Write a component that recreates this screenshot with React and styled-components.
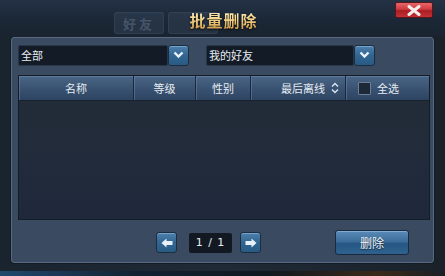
import styled, { createGlobalStyle } from "styled-components";

const GlobalStyle = createGlobalStyle`
  html, body {
    margin: 0;
    padding: 0;
    background: #141b24;
  }
  * { box-sizing: border-box; }
`;

const FONT = `"Noto Sans CJK SC", "Noto Sans", "Liberation Sans", sans-serif`;

const Window = styled.div`
  width: 445px;
  height: 276px;
  display: flex;
  flex-direction: column;
  overflow: hidden;
  font-family: ${FONT};
  background: linear-gradient(90deg, #1a242f 0%, #1f2a36 50%, #1a2129 100%);
  position: relative;
`;

const TitleBar = styled.div`
  height: 37px;
  flex-shrink: 0;
  position: relative;
  display: flex;
  align-items: center;
  justify-content: center;
  background: linear-gradient(180deg, #243246 0%, #1b2736 55%, #1a2430 100%);
`;

const GhostTabs = styled.div`
  position: absolute;
  left: 114px;
  top: 12px;
  display: flex;
  gap: 4px;
`;

const GhostTab = styled.div`
  width: 50px;
  height: 22px;
  border-radius: 3px;
  background: rgba(60, 78, 100, 0.35);
  border: 1px solid rgba(80, 100, 125, 0.25);
  color: rgba(120, 138, 160, 0.4);
  font-size: 13px;
  font-weight: bold;
  display: flex;
  align-items: center;
  justify-content: center;
  letter-spacing: 3px;
`;

const Title = styled.div`
  font-size: 16px;
  font-weight: bold;
  letter-spacing: 1px;
  margin-left: 2px;
  margin-top: 2px;
  background: linear-gradient(180deg, #fff6d2 0%, #f3d58a 45%, #c98d32 100%);
  -webkit-background-clip: text;
  background-clip: text;
  color: transparent;
  filter: drop-shadow(0 1px 1px rgba(0, 0, 0, 0.8));
  position: relative;
  z-index: 1;
`;

const CloseButton = styled.div`
  position: absolute;
  right: 12px;
  top: 2px;
  width: 38px;
  height: 16px;
  border-radius: 2px;
  background: linear-gradient(180deg, #e8676a 0%, #cf3a3e 45%, #a81e24 55%, #c33136 100%);
  border: 1px solid #5a1518;
  display: flex;
  align-items: center;
  justify-content: center;
`;

const Body = styled.div`
  flex: 1;
  padding: 0 11px 13px 11px;
  display: flex;
  flex-direction: column;
`;

const Panel = styled.div`
  flex: 1;
  background: #3a4a60;
  border: 1px solid #586a83;
  border-radius: 3px;
  box-shadow: 0 0 0 1px #131a22;
  padding: 6px 5px 0 6px;
  display: flex;
  flex-direction: column;
`;

const FilterRow = styled.div`
  display: flex;
  gap: 17px;
  height: 22px;
`;

const Select = styled.div`
  display: flex;
  align-items: center;
`;

const SelectField = styled.div`
  width: ${(p) => p.$w}px;
  height: 21px;
  background: #131b26;
  border: 1px solid #28364a;
  border-radius: 2px;
  color: #e8edf3;
  font-size: 11px;
  padding-left: 2px;
  display: flex;
  align-items: center;
`;

const IconButton = styled.div`
  width: ${(p) => p.$w || 21}px;
  height: 21px;
  border-radius: 3px;
  background: linear-gradient(180deg, #4d80ad 0%, #326690 50%, #285a84 100%);
  border: 1px solid #1c2d40;
  box-shadow: inset 0 1px 0 rgba(160, 200, 235, 0.5);
  display: flex;
  align-items: center;
  justify-content: center;
`;

const Table = styled.div`
  margin-top: 9px;
  height: 145px;
  width: 412px;
  display: flex;
  flex-direction: column;
  border: 1px solid #141c26;
  background: #212b3a;
`;

const HeaderRow = styled.div`
  display: grid;
  grid-template-columns: 115px 62px 55px 95px 1fr;
  height: 25px;
`;

const HeaderCell = styled.div`
  display: flex;
  align-items: center;
  justify-content: ${(p) => p.$justify || "center"};
  gap: 6px;
  padding: ${(p) => p.$pad || "0"};
  color: #e6ebf2;
  font-size: 11px;
  background: linear-gradient(180deg, #4a6586 0%, #3a5373 50%, #2d4562 100%);
  border-right: 1px solid #1b2838;
  border-bottom: 1px solid #18222e;
  box-shadow: inset 1px 1px 0 rgba(130, 160, 195, 0.35);
  &:last-child {
    border-right: none;
  }
`;

const Checkbox = styled.div`
  width: 13px;
  height: 13px;
  background: #1e2938;
  border: 1px solid #6b7f99;
  border-radius: 1px;
`;

const TableBody = styled.div`
  flex: 1;
  background: linear-gradient(180deg, #222c38 0%, #212b3b 50%, #1f293b 100%);
`;

const Footer = styled.div`
  flex: 1;
  display: flex;
  align-items: center;
  padding-top: 3px;
`;

const Pager = styled.div`
  display: flex;
  align-items: center;
  gap: 12px;
  margin-left: 138px;
`;

const PageBox = styled.div`
  width: 43px;
  height: 20px;
  background: #121923;
  border-radius: 2px;
  color: #e8edf3;
  font-family: "DejaVu Sans", sans-serif;
  font-size: 11px;
  display: flex;
  align-items: center;
  justify-content: center;
  margin-right: -4px;
  letter-spacing: 1px;
`;

const DeleteButton = styled.div`
  margin-left: 74px;
  width: 74px;
  height: 25px;
  border-radius: 3px;
  border: 1px solid #1a2a3c;
  background: linear-gradient(180deg, #5a8bb8 0%, #3d6d99 45%, #265784 55%, #2f628e 100%);
  box-shadow: inset 0 1px 0 rgba(170, 205, 240, 0.5);
  color: #f1f5fa;
  font-size: 12px;
  display: flex;
  align-items: center;
  justify-content: center;
  text-shadow: 0 1px 1px rgba(0, 0, 0, 0.6);
`;

const BottomStrip = styled.div`
  position: absolute;
  left: 0;
  right: 0;
  bottom: 0;
  height: 5px;
  background: linear-gradient(90deg, #1f4a6e 0%, #122233 30%, #101820 60%, #3a2a18 85%, #1a1e24 100%);
`;

const Chevron = () => (
  <svg width="11" height="8" viewBox="0 0 11 8">
    <path d="M1.5 1.5 L5.5 5.5 L9.5 1.5" fill="none" stroke="#eaf2fb" strokeWidth="2.4" />
  </svg>
);

const Arrow = ({ dir }) => (
  <svg width="12" height="10" viewBox="0 0 12 10">
    <path
      d={dir === "left" ? "M0.5 5 L5.5 0.5 L5.5 3 L11.5 3 L11.5 7 L5.5 7 L5.5 9.5 Z" : "M11.5 5 L6.5 0.5 L6.5 3 L0.5 3 L0.5 7 L6.5 7 L6.5 9.5 Z"}
      fill="#e8f1fb"
    />
  </svg>
);

const SortIcon = () => (
  <svg width="8" height="12" viewBox="0 0 8 12">
    <path d="M1 4.5 L4 1.5 L7 4.5 M1 7.5 L4 10.5 L7 7.5" fill="none" stroke="#d8e2ee" strokeWidth="1.5" />
  </svg>
);

const CloseX = () => (
  <svg width="14" height="11" viewBox="0 0 14 11">
    <path d="M2 1.5 L12 9.5 M12 1.5 L2 9.5" stroke="#f3eded" strokeWidth="3" strokeLinecap="round" />
  </svg>
);

export default function App() {
  return (
    <>
      <GlobalStyle />
      <Window>
        <TitleBar>
          <GhostTabs>
            <GhostTab>好友</GhostTab>
            <GhostTab />
          </GhostTabs>
          <Title>批量删除</Title>
          <CloseButton>
            <CloseX />
          </CloseButton>
        </TitleBar>
        <Body>
          <Panel>
            <FilterRow>
              <Select>
                <SelectField $w={150}>全部</SelectField>
                <IconButton>
                  <Chevron />
                </IconButton>
              </Select>
              <Select>
                <SelectField $w={148}>我的好友</SelectField>
                <IconButton>
                  <Chevron />
                </IconButton>
              </Select>
            </FilterRow>
            <Table>
              <HeaderRow>
                <HeaderCell>名称</HeaderCell>
                <HeaderCell>等级</HeaderCell>
                <HeaderCell>性别</HeaderCell>
                <HeaderCell $justify="flex-end" $pad="0 6px 0 0">
                  最后离线 <SortIcon />
                </HeaderCell>
                <HeaderCell $justify="flex-start" $pad="0 0 0 12px">
                  <Checkbox /> 全选
                </HeaderCell>
              </HeaderRow>
              <TableBody />
            </Table>
            <Footer>
              <Pager>
                <IconButton>
                  <Arrow dir="left" />
                </IconButton>
                <PageBox>1 / 1</PageBox>
                <IconButton>
                  <Arrow dir="right" />
                </IconButton>
              </Pager>
              <DeleteButton>删除</DeleteButton>
            </Footer>
          </Panel>
        </Body>
        <BottomStrip />
      </Window>
    </>
  );
}
